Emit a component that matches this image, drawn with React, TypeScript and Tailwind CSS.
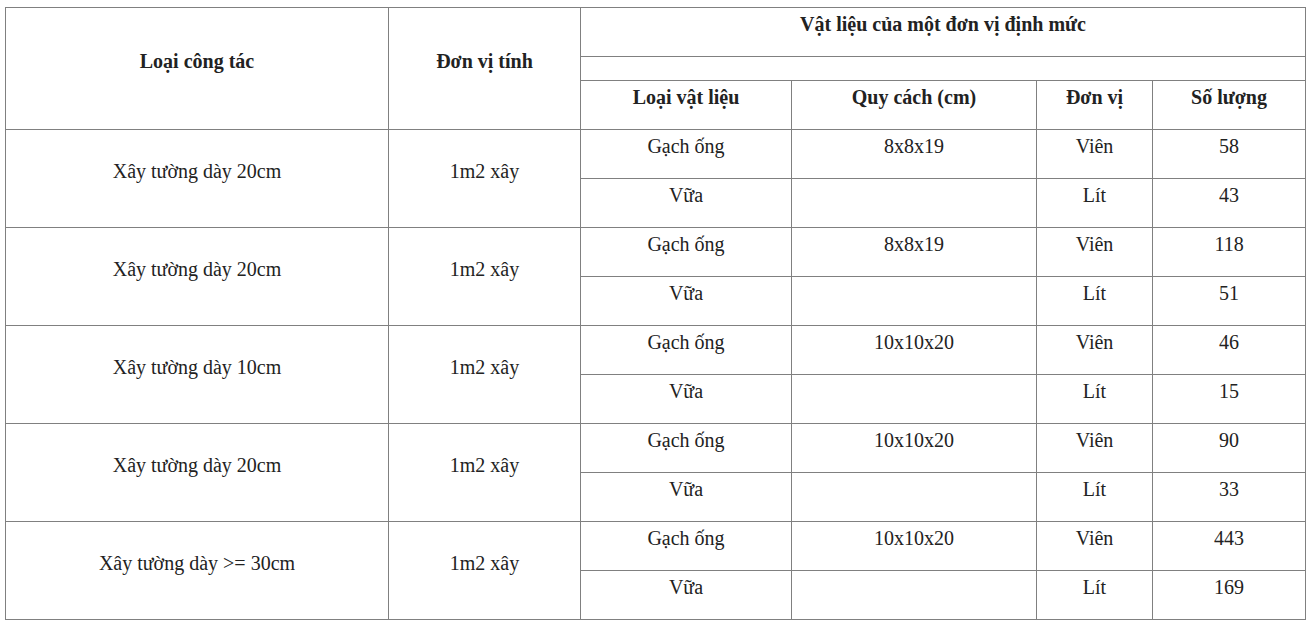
const rows = [
  { task: "Xây tường dày 20cm", size: "8x8x19", brick: "58", mortar: "43" },
  { task: "Xây tường dày 20cm", size: "8x8x19", brick: "118", mortar: "51" },
  { task: "Xây tường dày 10cm", size: "10x10x20", brick: "46", mortar: "15" },
  { task: "Xây tường dày 20cm", size: "10x10x20", brick: "90", mortar: "33" },
  { task: "Xây tường dày >= 30cm", size: "10x10x20", brick: "443", mortar: "169" },
];

const cell = "border border-[#808080] text-center align-middle p-0";

function Txt({ children, bold }: { children?: React.ReactNode; bold?: boolean }) {
  return (
    <p className={`mb-[16px] leading-[22px] ${bold ? "font-bold" : ""}`}>{children}</p>
  );
}

export default function App() {
  return (
    <div className="bg-white w-[1312px] h-[626px] pt-[7px] pl-[5px] text-[#222] text-[20px] font-['Liberation_Serif','Times_New_Roman',serif]">
      <table className="border-collapse table-fixed w-[1300px]">
        <colgroup>
          <col className="w-[383px]" />
          <col className="w-[192px]" />
          <col className="w-[211px]" />
          <col className="w-[245px]" />
          <col className="w-[116px]" />
          <col className="w-[153px]" />
        </colgroup>
        <thead>
          <tr className="h-[49px]">
            <th rowSpan={3} className={cell}>
              <Txt bold>Loại công tác</Txt>
            </th>
            <th rowSpan={3} className={cell}>
              <Txt bold>Đơn vị tính</Txt>
            </th>
            <th colSpan={4} className={cell}>
              <Txt bold>Vật liệu của một đơn vị định mức</Txt>
            </th>
          </tr>
          <tr className="h-[24px]">
            <th colSpan={4} className={cell}></th>
          </tr>
          <tr className="h-[49px]">
            <th className={cell}>
              <Txt bold>Loại vật liệu</Txt>
            </th>
            <th className={cell}>
              <Txt bold>Quy cách (cm)</Txt>
            </th>
            <th className={cell}>
              <Txt bold>Đơn vị</Txt>
            </th>
            <th className={cell}>
              <Txt bold>Số lượng</Txt>
            </th>
          </tr>
        </thead>
        <tbody>
          {rows.map((r, i) => (
            <>
              <tr key={`a${i}`} className="h-[49px]">
                <td rowSpan={2} className={cell}>
                  <Txt>{r.task}</Txt>
                </td>
                <td rowSpan={2} className={cell}>
                  <Txt>1m2 xây</Txt>
                </td>
                <td className={cell}>
                  <Txt>Gạch ống</Txt>
                </td>
                <td className={cell}>
                  <Txt>{r.size}</Txt>
                </td>
                <td className={cell}>
                  <Txt>Viên</Txt>
                </td>
                <td className={cell}>
                  <Txt>{r.brick}</Txt>
                </td>
              </tr>
              <tr key={`b${i}`} className="h-[49px]">
                <td className={cell}>
                  <Txt>Vữa</Txt>
                </td>
                <td className={cell}></td>
                <td className={cell}>
                  <Txt>Lít</Txt>
                </td>
                <td className={cell}>
                  <Txt>{r.mortar}</Txt>
                </td>
              </tr>
            </>
          ))}
        </tbody>
      </table>
    </div>
  );
}
